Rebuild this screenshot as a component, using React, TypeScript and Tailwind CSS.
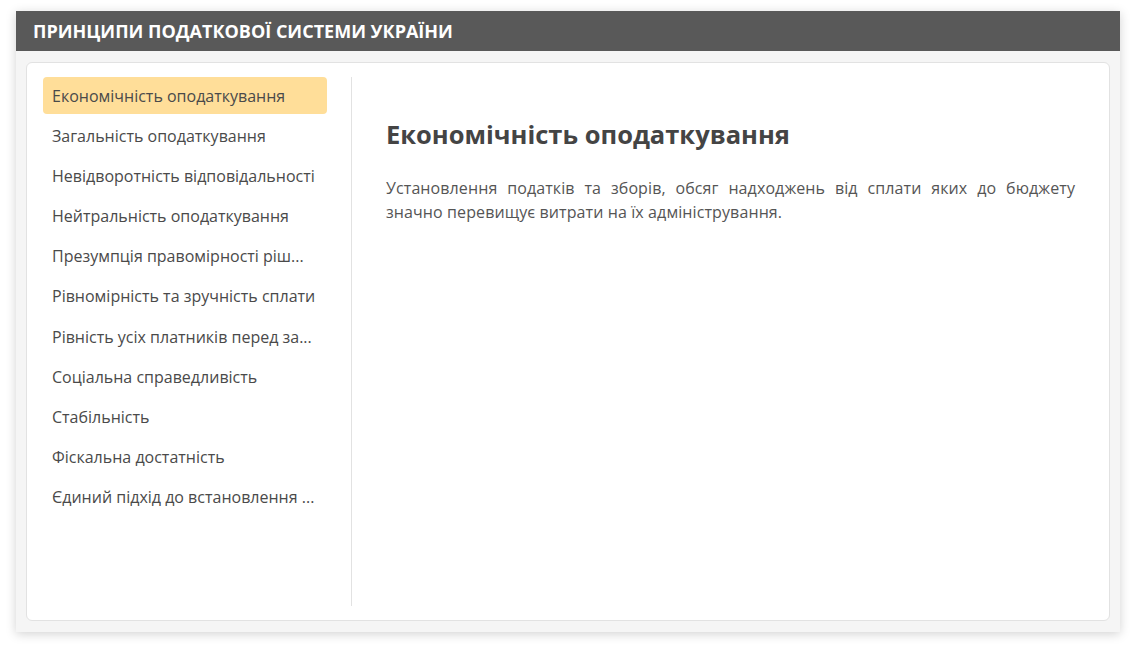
import * as React from "react";

const items = [
  "Економічність оподаткування",
  "Загальність оподаткування",
  "Невідворотність відповідальності",
  "Нейтральність оподаткування",
  "Презумпція правомірності ріш...",
  "Рівномірність та зручність сплати",
  "Рівність усіх платників перед за...",
  "Соціальна справедливість",
  "Стабільність",
  "Фіскальна достатність",
  "Єдиний підхід до встановлення ...",
];

export default function App() {
  const [active, setActive] = React.useState(0);

  return (
    <div className="min-h-[653px] w-[1136px] bg-white pl-4 pt-[11px] font-['Open_Sans',sans-serif]">
      <div className="w-[1104px] bg-[#f5f5f5] shadow-[0_2px_10px_rgba(0,0,0,0.18)]">
        <div className="flex h-10 items-center bg-[#595959] px-[17px] text-[18px] font-bold uppercase text-white">
          Принципи податкової системи України
        </div>
        <div className="px-[10px] py-[11px]">
          <div className="flex h-[559px] rounded-md border border-[#e2e2e2] bg-white pl-4 pr-[34px] pt-[14px] pb-[14px]">
            <ul className="w-[309px] shrink-0 border-r border-[#e2e2e2] pr-6">
              {items.map((t, i) => (
                <li
                  key={t}
                  onClick={() => setActive(i)}
                  className={`mb-[3.2px] flex h-[37px] cursor-pointer items-center whitespace-nowrap rounded px-[9px] text-[16px] text-[#4a4a4a] ${
                    i === active ? "bg-[#ffde99]" : ""
                  }`}
                >
                  {t}
                </li>
              ))}
            </ul>
            <div className="flex-1 pl-[34px] pt-[40px]">
              <h2 className="text-[25.5px] font-bold leading-[34px] text-[#444]">{items[active]}</h2>
              <p className="mt-[25px] text-justify text-[16px] leading-6 tracking-[0.1px] text-[#555]">
                Установлення податків та зборів, обсяг надходжень від сплати яких до бюджету значно перевищує
                витрати на їх адміністрування.
              </p>
            </div>
          </div>
        </div>
      </div>
    </div>
  );
}
